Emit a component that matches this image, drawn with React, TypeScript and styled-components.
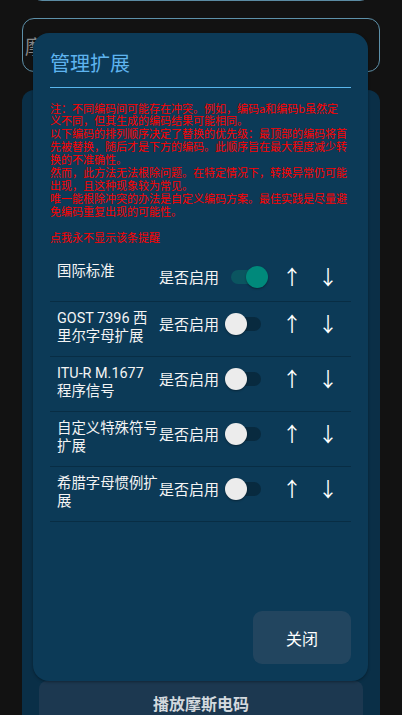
import React from "react";
import styled, { createGlobalStyle } from "styled-components";

const GlobalStyle = createGlobalStyle`
  html, body { margin: 0; padding: 0; background: #121212; }
  * { box-sizing: border-box; }
  body { font-family: Roboto, "Noto Sans CJK SC", sans-serif; }
`;

const Screen = styled.div`
  position: relative;
  width: 402px;
  height: 715px;
  overflow: hidden;
  background: #121212;
  display: flex;
  flex-direction: column;
`;

const TopBox = styled.div`
  height: 20px;
  margin: -19px 32px 0;
  border: 1px solid #5b8ba3;
  border-radius: 12px;
  flex-shrink: 0;
`;

const Input = styled.div`
  height: 54px;
  margin: 17px 22px 0;
  border: 1px solid #5d90a9;
  border-radius: 12px;
  display: flex;
  align-items: center;
  padding-left: 2px;
  flex-shrink: 0;
  font-family: "Noto Sans CJK SC", sans-serif;
  font-size: 19px;
  color: #8a8a8a;
`;

const Card = styled.div`
  flex: 1;
  margin: 18px 22px 0;
  background: #0a2f47;
  border-radius: 12px 12px 0 0;
  padding: 0 17px;
  display: flex;
  flex-direction: column;
  justify-content: flex-end;
`;

const PlayButton = styled.div`
  height: 48px;
  margin-bottom: -14px;
  background: #1c3850;
  border-radius: 8px;
  display: flex;
  align-items: center;
  justify-content: center;
  font-family: "Noto Sans CJK SC", sans-serif;
  font-weight: 700;
  font-size: 16px;
  color: #d3d9de;
  padding-bottom: 4px;
`;

const Dialog = styled.div`
  position: absolute;
  left: 33px;
  top: 33px;
  width: 335px;
  height: 648px;
  background: #0c3a57;
  border-radius: 16px;
  box-shadow: 0 1px 3px rgba(0, 0, 0, 0.35);
  padding: 16px 17px 17px;
  display: flex;
  flex-direction: column;
`;

const Title = styled.div`
  font-family: "Noto Sans CJK SC", sans-serif;
  font-size: 20px;
  line-height: 28px;
  color: #5fb4ef;
`;

const Rule = styled.div`
  height: 1px;
  margin-top: 10px;
  background: #5ab6ec;
`;

const Note = styled.div`
  margin-top: 13.5px;
  font-family: "Noto Sans CJK SC", sans-serif;
  font-size: 11px;
  line-height: 12.9px;
  color: #ff0000;
  white-space: pre;
`;

const List = styled.div`
  margin-top: 11.5px;
  display: flex;
  flex-direction: column;
`;

const Row = styled.div`
  display: flex;
  align-items: flex-start;
  padding: 8px 0 10px 7px;
  border-bottom: 1px solid #082d44;
`;

const Label = styled.div`
  width: 102px;
  flex-shrink: 0;
  font-family: Roboto, "Noto Sans CJK SC", sans-serif;
  font-size: 14.4px;
  line-height: 18px;
  color: #f4f4f4;
`;

const Controls = styled.div`
  height: 28px;
  display: flex;
  align-items: center;
`;

const SwitchText = styled.span`
  font-family: "Noto Sans CJK SC", sans-serif;
  font-size: 15px;
  color: #f4f4f4;
  width: 72px;
  flex-shrink: 0;
`;

const Track = styled.div<{ $on: boolean }>`
  position: relative;
  width: 30px;
  height: 14px;
  border-radius: 7px;
  background: ${(p) => (p.$on ? "#0b5560" : "#082a3f")};
  flex-shrink: 0;
`;

const Thumb = styled.div<{ $on: boolean }>`
  position: absolute;
  top: -4px;
  left: ${(p) => (p.$on ? "15px" : "-6px")};
  width: 22px;
  height: 22px;
  border-radius: 50%;
  background: ${(p) => (p.$on ? "#00897b" : "#ececec")};
  box-shadow: 0 1px 2px rgba(0, 0, 0, 0.35);
`;

const Arrow = styled.span`
  width: 36px;
  flex-shrink: 0;
  text-align: center;
  font-family: "Noto Sans CJK SC", sans-serif;
  font-size: 20px;
  line-height: 28px;
  color: #ffffff;
`;

const Footer = styled.div`
  margin-top: auto;
  display: flex;
  justify-content: flex-end;
`;

const CloseButton = styled.div`
  width: 98px;
  height: 53px;
  border-radius: 9px;
  background: #22455f;
  display: flex;
  align-items: center;
  justify-content: center;
  font-family: "Noto Sans CJK SC", sans-serif;
  font-size: 16px;
  color: #ffffff;
`;

const noteText = [
  "注：不同编码间可能存在冲突。例如，编码a和编码b虽然定",
  "义不同，但其生成的编码结果可能相同。",
  "以下编码的排列顺序决定了替换的优先级：最顶部的编码将首",
  "先被替换，随后才是下方的编码。此顺序旨在最大程度减少转",
  "换的不准确性。",
  "然而，此方法无法根除问题。在特定情况下，转换异常仍可能",
  "出现，且这种现象较为常见。",
  "唯一能根除冲突的办法是自定义编码方案。最佳实践是尽量避",
  "免编码重复出现的可能性。",
  "",
  "点我永不显示该条提醒",
].join("\n");

const items = [
  { name: "国际标准", on: true },
  { name: "GOST 7396 西里尔字母扩展", on: false },
  { name: "ITU-R M.1677 程序信号", on: false },
  { name: "自定义特殊符号扩展", on: false },
  { name: "希腊字母惯例扩展", on: false },
];

export default function App() {
  return (
    <>
      <GlobalStyle />
      <Screen>
        <TopBox />
        <Input>摩斯电码</Input>
        <Card>
          <PlayButton>播放摩斯电码</PlayButton>
        </Card>
        <Dialog>
          <Title>管理扩展</Title>
          <Rule />
          <Note>{noteText}</Note>
          <List>
            {items.map((it) => (
              <Row key={it.name}>
                <Label>{it.name}</Label>
                <Controls>
                  <SwitchText>是否启用</SwitchText>
                  <Track $on={it.on}>
                    <Thumb $on={it.on} />
                  </Track>
                  <Arrow style={{ marginLeft: "13px" }}>↑</Arrow>
                  <Arrow>↓</Arrow>
                </Controls>
              </Row>
            ))}
          </List>
          <Footer>
            <CloseButton>关闭</CloseButton>
          </Footer>
        </Dialog>
      </Screen>
    </>
  );
}
